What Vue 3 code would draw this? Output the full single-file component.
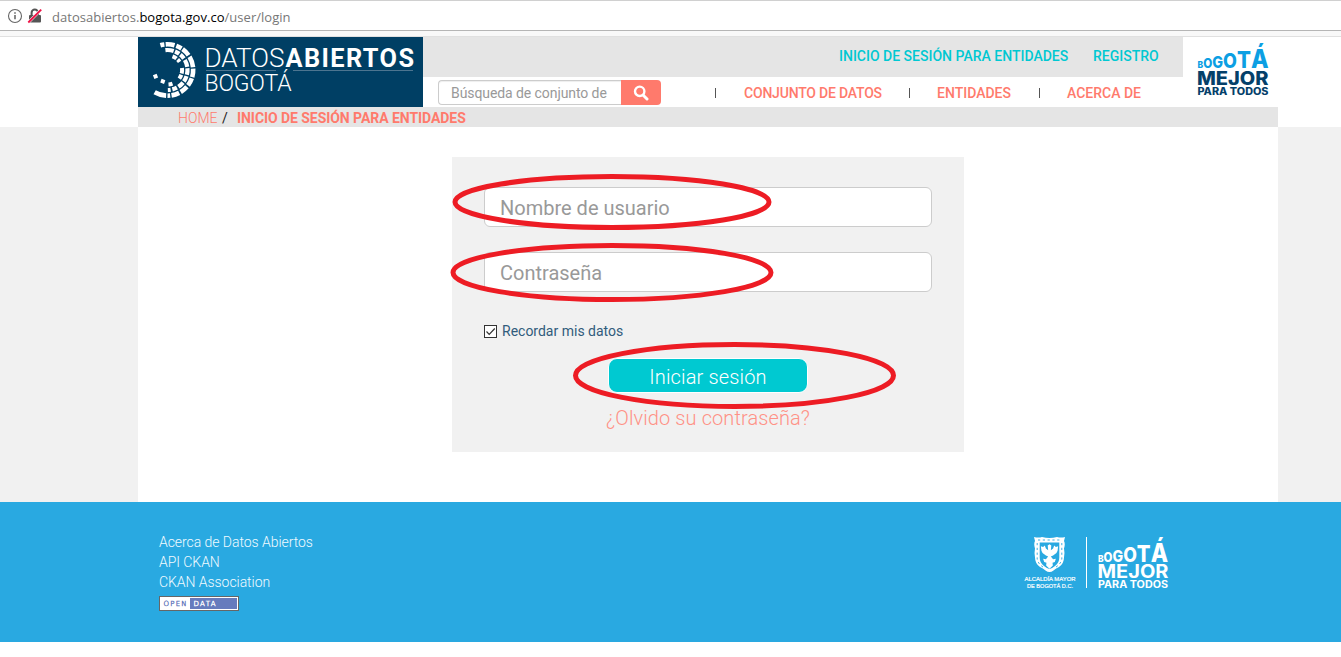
<script setup>
const menu = [
  { label: 'CONJUNTO DE DATOS', cls: 'm1' },
  { label: 'ENTIDADES', cls: 'm2' },
  { label: 'ACERCA DE', cls: 'm3' },
]

// Segments of the ring emblem: [radius, thickness, start angle, end angle], clockwise from 12 o'clock
const segments = [
  [25.7, 4.6, -16, -7], [25.7, 4.6, -4, 16], [25.7, 4.6, 20, 33], [25.7, 4.6, 36, 55], [25.7, 4.6, 59, 84],
  [25.7, 4.6, 87, 106], [25.7, 4.6, 109, 127], [25.7, 4.6, 131, 149], [25.7, 4.6, 153, 171], [25.7, 4.6, 174, 180], [25.7, 4.6, 183, 210],
  [20, 4.2, -6, 18], [20, 4.2, 22, 36], [20, 4.2, 40, 55], [20, 4.2, 60, 81], [20, 4.2, 85, 104],
  [20, 4.2, 108, 125], [20, 4.2, 129, 147], [20, 4.2, 152, 166], [20, 4.2, 171, 179],
  [14.6, 4, 20, 38], [14.6, 4, 44, 56], [14.6, 4, 82, 104], [14.6, 4, 109, 126], [14.6, 4, 160, 176],
]
const pt = (r, a) => {
  const t = (a * Math.PI) / 180
  return `${(167.5 + r * Math.sin(t)).toFixed(2)} ${(70 - r * Math.cos(t)).toFixed(2)}`
}
const arc = ([r, , a, b]) => `M${pt(r, a)}A${r} ${r} 0 0 1 ${pt(r, b)}`
</script>

<template>
  <div class="page">
    <div class="urlbar">
      <svg class="info" width="16" height="16" viewBox="0 0 16 16">
        <circle cx="8" cy="8" r="6.5" fill="none" stroke="#666" stroke-width="1.1" />
        <path d="M8 7v4.3M8 4.2v1.6" stroke="#555" stroke-width="1.4" />
      </svg>
      <svg class="lock" width="16" height="16" viewBox="0 0 16 16">
        <path d="M4.6 7V4.8a3.2 3.2 0 0 1 6.4 0V7" fill="none" stroke="#555" stroke-width="2" />
        <rect x="2" y="7" width="12" height="7.5" rx="1" fill="#555" />
        <path d="M1 14.8L14.5 1.3" stroke="#fff" stroke-width="3" />
        <path d="M1.3 14.5L14.2 1.6" stroke="#ee1144" stroke-width="1.9" />
      </svg>
      <span class="url">datosabiertos.<b>bogota.gov.co</b>/user/login</span>
    </div>
    <div class="chrome-gap"></div>

    <header>
      <div class="wrap head">
        <div class="brand">
          <svg width="285" height="70" viewBox="138 37 285 70">
            <g fill="none" stroke="#fff">
              <path v-for="(s, i) in segments" :key="i" :d="arc(s)" :stroke-width="s[1]" />
            </g>
            <g fill="#fff">
              <rect x="-2" y="-2" width="4" height="4" transform="translate(155.5 76.3) rotate(-22)" />
              <rect x="-2" y="-2" width="4" height="4" transform="translate(162.8 81.4) rotate(20)" />
            </g>
            <path d="M206 70.500h70M293 70.500h120" stroke="#4d7590" stroke-width="1" />
            <g fill="#fff" font-family="Roboto, sans-serif">
              <text x="204.500" y="66.700" font-size="25" font-weight="300" textLength="80" lengthAdjust="spacingAndGlyphs">DATOS</text>
              <text x="285.500" y="66.700" font-size="25.300" font-weight="700" textLength="128.500" lengthAdjust="spacing">ABIERTOS</text>
              <text x="204.500" y="90.700" font-size="23" font-weight="300" textLength="87" lengthAdjust="spacing">BOGOTÁ</text>
            </g>
          </svg>
        </div>
        <div class="mid">
          <nav class="top"><a class="t1">INICIO DE SESIÓN PARA ENTIDADES</a><a class="t2">REGISTRO</a></nav>
          <div class="main">
            <div class="search">
              <div class="field">Búsqueda de conjunto de</div>
              <div class="go">
                <svg width="16" height="16" viewBox="0 0 16 16">
                  <circle cx="6.700" cy="6.300" r="4.700" fill="none" stroke="#fff" stroke-width="2.400" />
                  <path d="M10 10l4 4" stroke="#fff" stroke-width="3" stroke-linecap="round" />
                </svg>
              </div>
            </div>
            <nav class="menu">
              <a v-for="m in menu" :key="m.label" :class="m.cls"><i></i><span>{{ m.label }}</span></a>
            </nav>
          </div>
        </div>
        <svg class="bog" width="72" height="56" viewBox="0 0 72 56" font-family="Inter, sans-serif">
          <text x="-.5" y="25" font-weight="800" fill="#0c9fe3" textLength="71" lengthAdjust="spacingAndGlyphs"><tspan font-size="9.500">B</tspan><tspan font-size="13">O</tspan><tspan font-size="16">G</tspan><tspan font-size="20">O</tspan><tspan font-size="23">T</tspan><tspan font-size="25.500">Á</tspan></text>
          <text x="-1" y="41.800" font-size="18.500" font-weight="800" fill="#04406a" textLength="71.500" lengthAdjust="spacingAndGlyphs">MEJOR</text>
          <text x="-.5" y="51.700" font-size="9.700" font-weight="800" fill="#04406a" textLength="71" lengthAdjust="spacingAndGlyphs">PARA TODOS</text>
        </svg>
      </div>
      <div class="wrap crumbs"><span class="home">HOME</span><span class="sl">/</span><b>INICIO DE SESIÓN PARA ENTIDADES</b></div>
    </header>

    <main class="wrap content">
      <form class="card" @submit.prevent>
        <div class="input user">Nombre de usuario</div>
        <div class="input pass">Contraseña</div>
        <div class="remember">
          <svg width="13" height="13" viewBox="0 0 13 13">
            <rect x=".5" y=".5" width="12" height="12" fill="#fff" stroke="#333" />
            <path d="M2.500 6.500l2.700 2.800L10.800 3.500" fill="none" stroke="#333" stroke-width="1.200" />
          </svg>
          <span>Recordar mis datos</span>
        </div>
        <button type="button"><span>Iniciar sesión</span></button>
        <a class="forgot">¿Olvido su contraseña?</a>
        <svg class="marks" width="512" height="295" viewBox="452 157 512 295">
          <g fill="none" stroke="#ed1c24" stroke-width="5">
            <ellipse cx="612" cy="202" rx="157" ry="25.500" />
            <ellipse cx="612" cy="272.500" rx="159" ry="27" />
            <ellipse cx="734.500" cy="375.500" rx="159" ry="31" />
          </g>
        </svg>
      </form>
    </main>

    <footer>
      <div class="wrap foot">
        <div class="links">
          <a class="f1">Acerca de Datos Abiertos</a>
          <a class="f2">API CKAN</a>
          <a class="f3">CKAN Association</a>
          <svg class="od" width="80" height="15" viewBox="0 0 80 15">
            <rect x=".5" y=".5" width="79" height="14" fill="#fff" stroke="#666" />
            <rect x="31" y="2" width="47" height="11" fill="#667bbd" />
            <g font-family="DejaVu Sans, sans-serif" font-size="7">
              <text x="4.500" y="10" fill="#667bbd" stroke="#667bbd" stroke-width=".4" textLength="23">OPEN</text>
              <text x="34.500" y="10" fill="#fff" stroke="#fff" stroke-width=".4" textLength="22">DATA</text>
            </g>
          </svg>
        </div>
        <svg class="seal" width="146" height="56" viewBox="1023 534 146 56">
          <path d="M1034 537q4.500 1.200 8 0q7.500 1.800 15 0q4 1.200 8 0l-1 4q1.500 3 0 7.500q1 5 0 9q0 6-5 9.500q-3 1-5.500 3.500q-2 1.500-4 1.500q-2 0-4-1.500q-2.500-2.500-5.500-3.500q-5-3.500-5-9.500q-1-4 0-9q-1.500-4.500 0-7.500z" fill="#fff" />
          <path d="M1039.700 542.500h19.600v15q0 5.500-4.300 8.500q-3 2.500-5.500 3q-2.500-.5-5.500-3q-4.300-3-4.300-8.500z" fill="#29a9e1" />
          <g fill="none" stroke="#29a9e1" stroke-width=".9" stroke-dasharray="2.200 2.600">
            <path d="M1038 540h24M1037.200 543v16q1 5 5.800 8M1061.800 543v16q-1 5-5.800 8" />
          </g>
          <path transform="translate(1049.500 555.500) scale(1.120) translate(-1049.500 -555)" d="M1049.500 545l1.600 1l-.4 4.300l2-1.500l1-2.800l1.500 1.500l2-.8l-.5 4l-1 2l-3 2.200l-2 1l2 2.500l2.500-.5l-1 3l-2 .5l.3 2.500l-3 3l-3-3l.3-2.500l-2-.5l-1-3l2.500.5l2-2.500l-2-1l-3-2.200l-1-2l-.5-4l2 .8l1.500-1.500l1 2.800l2 1.500l-.4-4.300z" fill="#fff" />
          <g fill="#fff" stroke="#fff" stroke-width=".2" font-family="Liberation Sans, Arial, sans-serif" font-size="6.200">
            <text x="1024.500" y="580.600" textLength="51" lengthAdjust="spacingAndGlyphs">ALCALDÍA MAYOR</text>
            <text x="1027" y="587.800" textLength="46" lengthAdjust="spacingAndGlyphs">DE BOGOTÁ D.C.</text>
          </g>
          <path d="M1086.500 537v51" stroke="#fff" stroke-width="1" />
          <g transform="translate(1098 537)" font-family="Inter, sans-serif" fill="#fff">
            <text x="0" y="24.500" font-weight="800" textLength="70" lengthAdjust="spacingAndGlyphs"><tspan font-size="9.500">B</tspan><tspan font-size="13">O</tspan><tspan font-size="16">G</tspan><tspan font-size="20">O</tspan><tspan font-size="23">T</tspan><tspan font-size="25.500">Á</tspan></text>
            <text x="-.5" y="41.300" font-size="18.500" font-weight="700" textLength="71" lengthAdjust="spacingAndGlyphs">MEJOR</text>
            <text x="0" y="51" font-size="9.700" font-weight="700" textLength="70" lengthAdjust="spacingAndGlyphs">PARA TODOS</text>
          </g>
        </svg>
      </div>
    </footer>
  </div>
</template>

<style>
body { background: #fff; }
</style>

<style scoped>
* { box-sizing: border-box; }
.page { height: 657px; overflow: hidden; font-family: Roboto, "Open Sans", sans-serif; font-size: 14px; background: #fff; white-space: nowrap; }
.urlbar { height: 31px; border-top: 1px solid #d0d0d0; border-bottom: 1px solid #b5b5b5; display: flex; align-items: center; padding: 3px 0 0 7px; }
.info { margin-right: 4px; margin-top: -3px; }
.lock { margin-top: -3px; }
.url { margin-left: 9px; font-family: "Open Sans", "Noto Sans", sans-serif; font-size: 13px; letter-spacing: .03px; color: #777; line-height: 20px; }
.url b { font-weight: 400; color: #000; }
.chrome-gap { height: 6px; background: #f8f8f8; border-bottom: 1px solid #e0e0e0; }
.wrap { width: 1140px; margin-left: 138px; }
header { height: 90px; background: #fff; }
.head { height: 70px; display: flex; }
.brand { width: 285px; height: 70px; background: #003f64; }
.brand svg { display: block; }
.mid { width: 760px; }
.top { height: 40px; background: #e5e5e5; display: flex; align-items: center; padding: 0 0 2px 416px; color: #00c8d2; font-weight: 500; }
.t1 { width: 254px; }
.main { height: 30px; display: flex; padding: 3px 0 0 15px; }
.search { width: 223px; height: 25px; display: flex; }
.field { width: 184px; height: 25px; border: 1px solid #ccc; border-right: 0; border-radius: 4px 0 0 4px; padding-left: 12px; line-height: 24px; letter-spacing: -.08px; color: #999; box-shadow: inset 0 1px 1px rgba(0,0,0,.07); overflow: hidden; }
.go { width: 40px; background: #ff7a6c; border-radius: 0 4px 4px 0; padding: 5px 0 0 12px; }
.go svg { display: block; }
.menu { display: flex; height: 26px; margin-left: 54px; align-items: center; color: #ff7a6c; font-weight: 500; letter-spacing: -.2px; }
.menu a { display: flex; align-items: center; }
.menu i { width: 1px; height: 10px; background: #555; margin-right: 28px; }
.m1 { width: 194px; }
.m2 { width: 130px; }
.m2 i, .m3 i { margin-right: 27px; }
.m2, .m3 { letter-spacing: 0; }
.bog { margin: 6px 0 0 15px; overflow: visible; }
.crumbs { height: 20px; background: #e5e5e5; padding-left: 40px; line-height: 22px; display: flex; color: #ff7a6c; }
.home { width: 44px; font-weight: 300; }
.sl { width: 15px; color: #222; }
.crumbs b { font-weight: 700; letter-spacing: -.06px; }
.content { height: 375px; background: #fff; padding: 30px 0 0 314px; box-shadow: -138px 0 #f1f1f1, 63px 0 #f1f1f1; }
.card { position: relative; width: 512px; height: 295px; background: #f1f1f1; padding: 30px 32px 0; display: flex; flex-direction: column; }
.input { height: 40px; flex: none; border: 1px solid #ccc; border-radius: 6px; background: #fff; color: #999; font-size: 20px; line-height: 41px; padding-left: 15px; margin-bottom: 25px; }
.remember { display: flex; align-items: center; height: 20px; margin-top: 4px; color: #315c7c; }
.remember span { margin-left: 5px; }
button { font: inherit; font-size: 20px; width: 200px; height: 35px; margin: 17px 0 0 124px; border: 1px solid #fff; border-radius: 9px; background: #00c9d1; color: #fff; padding: 3px 0 0; line-height: 28px; font-weight: 300; letter-spacing: .15px; }
.forgot { color: #ff9186; font-size: 20px; font-weight: 300; letter-spacing: .1px; margin: 13px 0 0 122px; line-height: 24px; }
.marks { position: absolute; left: 0; top: 0; overflow: visible; }
footer { height: 140px; background: #29a9e1; }
.foot { display: flex; justify-content: space-between; padding: 30px 109px 0 21px; }
.links { display: flex; flex-direction: column; line-height: 20px; color: #f0faff; font-weight: 300; letter-spacing: -.05px; }
.od { margin-top: 4px; }
.seal { margin-top: 2px; }
</style>
